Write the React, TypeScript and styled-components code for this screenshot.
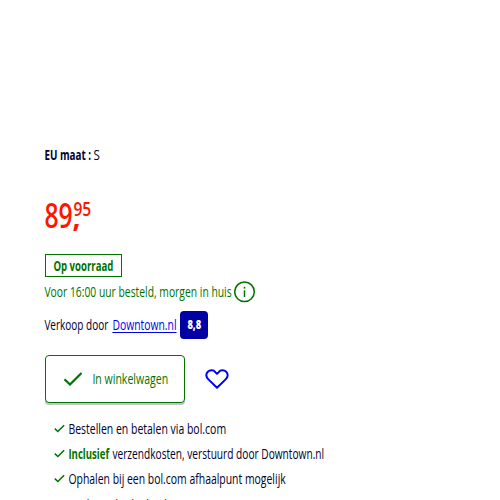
import React, { useLayoutEffect, useRef, useState } from 'react';
import styled, { createGlobalStyle, css } from 'styled-components';

const Global = createGlobalStyle`
  * { box-sizing: border-box; }
  body { margin: 0; background: #fff; overflow: hidden; }
`;

const green = '#007300';
const ink = '#00002c';

const Page = styled.main`
  width: 500px;
  height: 500px;
  overflow: hidden;
  padding: 145px 0 0 45px;
  font-family: 'Open Sans', 'Noto Sans', sans-serif;
  font-size: 13.6px;
  line-height: 20px;
  color: ${ink};
`;

const FitBox = styled.span<{ $w: number }>`
  display: inline-block;
  flex: none;
  width: ${(p) => p.$w}px;
  white-space: nowrap;
`;
const FitText = styled.span`
  display: inline-block;
  transform-origin: 0 50%;
`;

/* Condenses a run of text to the given width. */
function Fit({ w, children }: { w: number; children: React.ReactNode }) {
  const ref = useRef<HTMLSpanElement>(null);
  const [scale, setScale] = useState(1);
  useLayoutEffect(() => {
    if (ref.current) setScale(w / ref.current.offsetWidth);
  }, [w]);
  return (
    <FitBox $w={w}>
      <FitText ref={ref} style={{ transform: `translateX(-0.6px) scaleX(${scale})` }}>{children}</FitText>
    </FitBox>
  );
}

const Size = styled.div`
  display: flex;
  gap: 2px;
  height: 20px;
`;
const Strong = styled.strong<{ $green?: boolean }>`
  display: flex;
  font-weight: 700;
  ${(p) => p.$green && css`color: ${green};`}
`;

const Price = styled.div`
  display: flex;
  align-items: flex-start;
  height: 40px;
  margin-top: 30px;
  color: #ff1500;
  font-size: 33.5px;
  line-height: 40px;
  font-weight: 600;
`;
const Comma = styled.span`
  display: flex;
  padding-top: 1px;
  font-size: 28px;
  line-height: 40px;
  font-weight: 700;
`;
const Cents = styled.sup`
  display: flex;
  margin-left: -7px;
  font-size: 19px;
  line-height: 20px;
  padding-top: 4px;
  font-weight: 600;
`;

const Stock = styled.div`
  display: flex;
  align-items: center;
  justify-content: center;
  width: 77px;
  height: 23px;
  margin-top: 19px;
  border: 1px solid ${green};
  color: ${green};
  font-weight: 700;
`;

const Delivery = styled.div`
  display: flex;
  align-items: center;
  gap: 2px;
  height: 22px;
  margin-top: 4px;
  color: ${green};
  svg { margin-top: -1px; }
`;

const Seller = styled.div`
  display: flex;
  align-items: center;
  gap: 4px;
  height: 28px;
  margin-top: 8px;
`;
const SellerLink = styled.a`
  display: flex;
  height: 20px;
  color: #0000e6;
  span span { text-decoration: underline; text-underline-offset: 2px; text-decoration-thickness: 1px; text-decoration-skip-ink: none; }
`;
const Rating = styled.span`
  display: flex;
  align-items: center;
  justify-content: center;
  width: 28px;
  height: 28px;
  margin-left: -1px;
  padding-left: 1px;
  border-radius: 4px;
  background: #0000a4;
  color: #fff;
  font-size: 12px;
  font-weight: 800;
`;

const Actions = styled.div`
  display: flex;
  align-items: center;
  gap: 20px;
  height: 48px;
  margin-top: 16px;
`;
const CartButton = styled.button`
  display: flex;
  align-items: center;
  gap: 10px;
  width: 140px;
  height: 48px;
  padding: 0 0 0 17px;
  background: #fff;
  border: 1px solid ${green};
  border-radius: 4px;
  box-shadow: 0 2px 0 #c4c4c4;
  color: ${green};
  font: inherit;
`;

const Benefits = styled.ul`
  list-style: none;
  margin: 13px 0 0;
  padding: 0 0 0 9px;
`;
const Benefit = styled.li`
  display: flex;
  align-items: center;
  height: 25px;
  svg { margin-right: 4px; }
`;
const LastBenefit = styled(Benefit)`
  padding-top: 2px;
`;
const Words = styled.span`
  display: flex;
  gap: 3px;
`;

const Check = ({ size, stroke }: { size: number; stroke: number }) => (
  <svg width={size} height={size} viewBox="0 0 20 20" fill="none" stroke={green} strokeWidth={stroke}>
    <path d="M1.5 10.2 7 15.5 18.5 4" />
  </svg>
);

const Info = () => (
  <svg width="22" height="22" viewBox="0 0 22 22" fill="none" stroke={green}>
    <circle cx="10.5" cy="10.8" r="9.8" strokeWidth="1.5" />
    <path d="M10.5 9.3V16" strokeWidth="1.5" />
    <path d="M10.5 5.8v1.8" strokeWidth="1.6" />
  </svg>
);

const Heart = () => (
  <svg width="24" height="24" viewBox="0 0 24 24" fill="none" stroke="#0000f0" strokeWidth="2" strokeLinejoin="round">
    <path d="M12 20.8 3.4 12.4C.7 9.8.8 6.7 2.8 4.8 4.9 2.8 8.6 2.8 10.3 5.1L12 6.8l1.7-1.7c1.7-2.3 5.4-2.3 7.5-.3 2 1.9 2.1 5-.6 7.6Z" />
  </svg>
);

export default function App() {
  return (
    <Page>
      <Global />
      <Size><Strong><Fit w={47}>EU maat :</Fit></Strong><Fit w={6}>S</Fit></Size>
      <Price><Fit w={28}>89</Fit><Comma><Fit w={8}>,</Fit></Comma><Cents><Fit w={18}>95</Fit></Cents></Price>
      <Stock><Fit w={60}>Op voorraad</Fit></Stock>
      <Delivery><Fit w={187}>Voor 16:00 uur besteld, morgen in huis</Fit><Info /></Delivery>
      <Seller>
        <Fit w={64}>Verkoop door</Fit>
        <SellerLink><Fit w={64}>Downtown.nl</Fit></SellerLink>
        <Rating><Fit w={14}>8,8</Fit></Rating>
      </Seller>
      <Actions>
        <CartButton><Check size={20} stroke={2.2} /><Fit w={76}>In winkelwagen</Fit></CartButton>
        <Heart />
      </Actions>
      <Benefits>
        <Benefit><Check size={11} stroke={2.8} /><Fit w={158}>Bestellen en betalen via bol.com</Fit></Benefit>
        <Benefit><Check size={11} stroke={2.8} /><Words><Strong $green><Fit w={41}>Inclusief</Fit></Strong><Fit w={212}>verzendkosten, verstuurd door Downtown.nl</Fit></Words></Benefit>
        <Benefit><Check size={11} stroke={2.8} /><Fit w={217}>Ophalen bij een bol.com afhaalpunt mogelijk</Fit></Benefit>
        <LastBenefit><Check size={11} stroke={2.8} /><Fit w={205}>30 dagen bedenktijd en gratis retourneren</Fit></LastBenefit>
      </Benefits>
    </Page>
  );
}
